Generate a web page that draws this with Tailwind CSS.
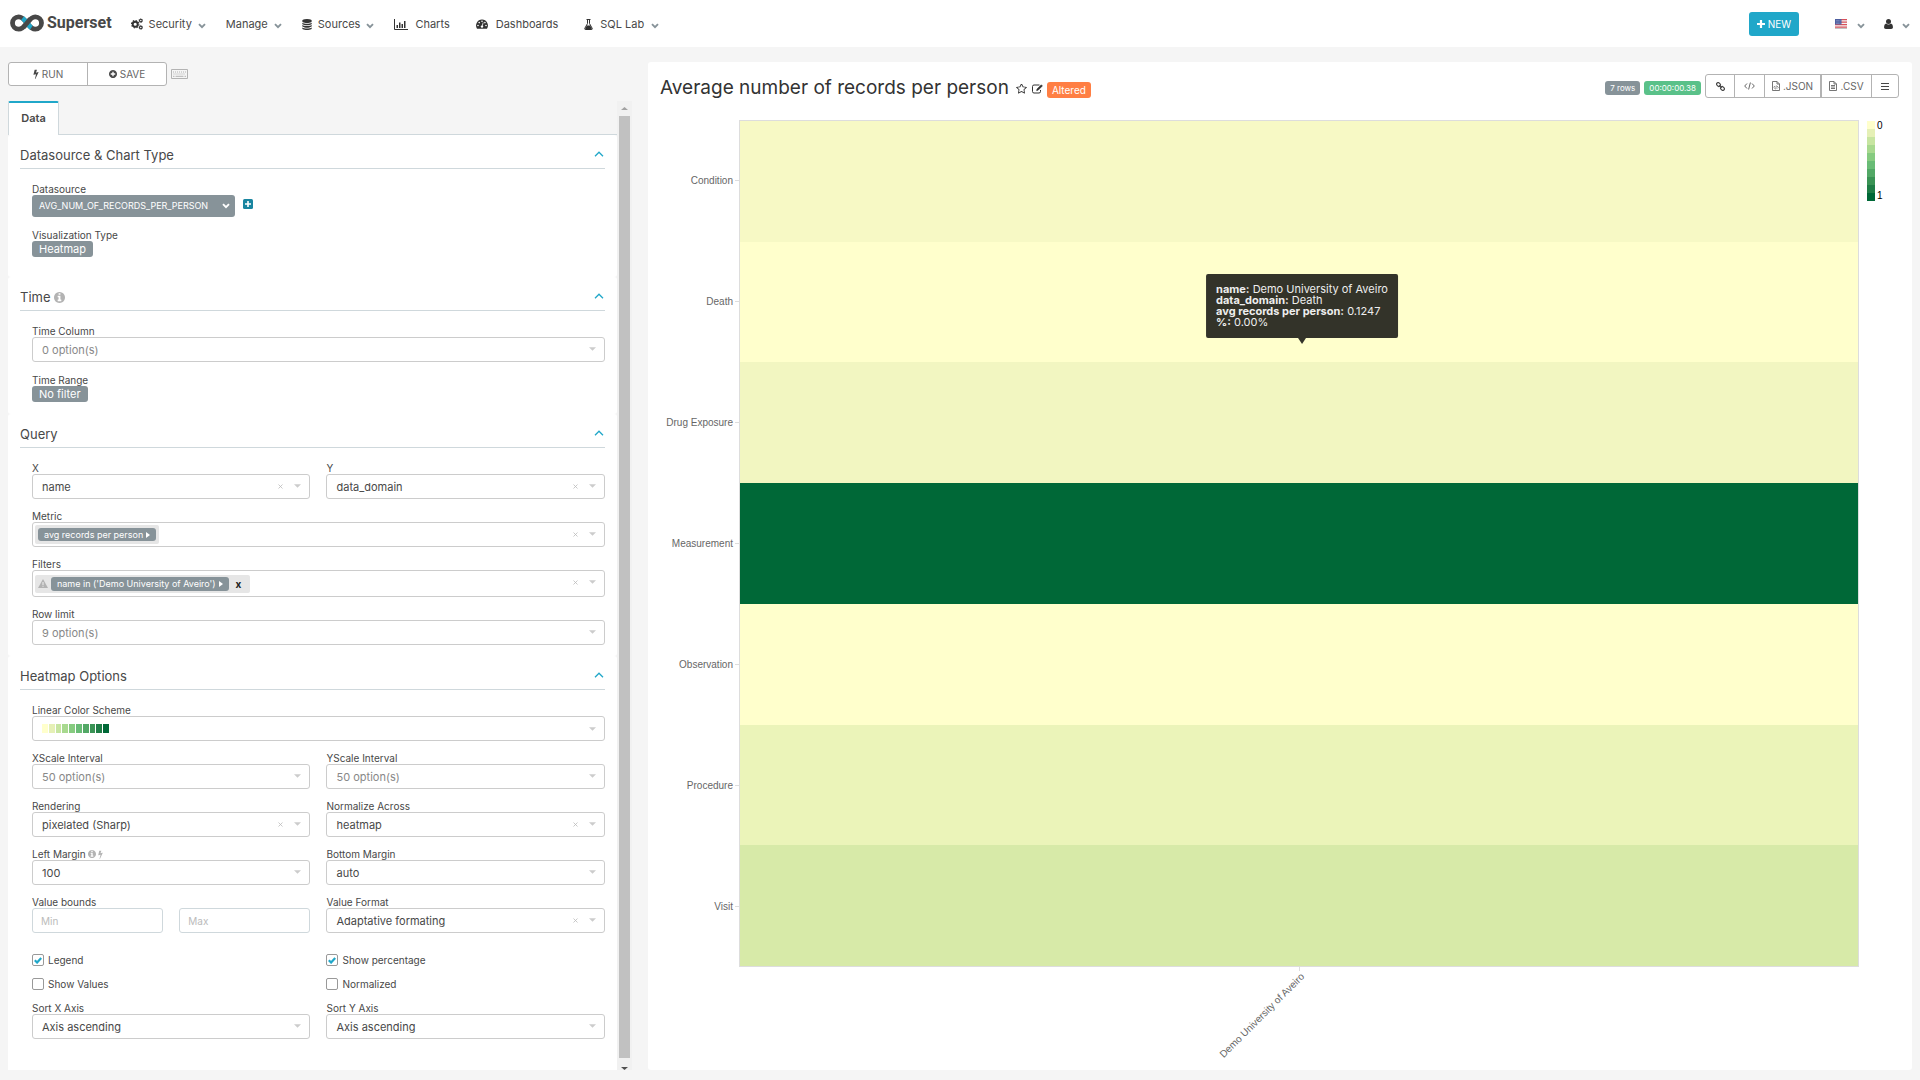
<!DOCTYPE html>
<html lang="en">
<head>
<meta charset="utf-8">
<meta name="viewport" content="width=device-width, initial-scale=1">
<title>Average number of records per person - Superset</title>
<script src="https://cdn.jsdelivr.net/npm/@tailwindcss/browser@4"></script>
</head>
<body class="flex min-h-screen flex-col bg-[#f5f5f5] font-['Inter',sans-serif] text-[11px] leading-[14px] text-[#484848]">

<svg class="hidden" aria-hidden="true">
  <symbol id="chev" viewBox="0 0 8 6"><path d="M1 1.200l3 3 3-3" fill="none" stroke="currentColor" stroke-width="1.900"/></symbol>
  <symbol id="up" viewBox="0 0 10 6"><path d="M1 5.200l4-4 4 4" fill="none" stroke="currentColor" stroke-width="1.300"/></symbol>
  <symbol id="bolt" viewBox="400 0 1000 1792"><path fill="currentColor" d="M1333 566q18 20 7 44l-540 1157q-13 25-42 25-4 0-14-2-17-5-25.500-19t-4.500-30l197-808-406 101q-4 1-12 1-18 0-31-11-18-15-13-39l201-825q4-14 16-23t28-9h328q19 0 32 12.500t13 29.500q0 8-5 18l-171 463 396-98q8-2 12-2 19 0 34 15z"/></symbol>
  <symbol id="info" viewBox="128 128 1536 1536"><path fill="currentColor" d="M1152 1376v-160q0-14-9-23t-23-9h-96v-512q0-14-9-23t-23-9h-320q-14 0-23 9t-9 23v160q0 14 9 23t23 9h96v320h-96q-14 0-23 9t-9 23v160q0 14 9 23t23 9h448q14 0 23-9t9-23zm-128-896v-160q0-14-9-23t-23-9h-192q-14 0-23 9t-9 23v160q0 14 9 23t23 9h192q14 0 23-9t9-23zm640 416q0 209-103 385.500t-279.500 279.500-385.500 103-385.500-103-279.500-279.500-103-385.500 103-385.500 279.500-279.500 385.500-103 385.500 103 279.500 279.500 103 385.500z"/></symbol>
  <symbol id="caret" viewBox="0 0 8 4"><path fill="currentColor" d="M0 0h8l-4 4z"/></symbol>
  <symbol id="x" viewBox="0 0 5 5"><path d="M.5.5l4 4M4.500.5l-4 4" stroke="currentColor" stroke-width=".8"/></symbol>
</svg>

<header class="flex h-[47px] items-center bg-white pr-[10px] pl-[10px]">
  <a href="#" class="mb-[2px] flex items-center gap-[3px]">
    <svg class="h-[18px] w-[34px]" viewBox="0 0 34 18" fill="none" stroke-width="4.800">
      <path d="M17 9c-3-4-5-6.200-8.300-6.200a6.200 6.200 0 0 0 0 12.400C12 15.200 14 13 17 9s5-6.200 8.300-6.200a6.200 6.200 0 0 1 0 12.400C22 15.200 20 13 17 9z" stroke="#484848"/>
      <path d="M12.600 4.200C14 5.300 15.500 7.200 17 9s2.900 3.800 4.300 4.800" stroke="#20a7c9"/>
      <path d="M13.600 13C14.800 12 15.800 10.600 17 9s2.200-3 3.400-4" stroke="#484848"/>
    </svg>
    <span class="font-['Roboto',sans-serif] text-base leading-5 font-bold">Superset</span>
  </a>
  <nav class="mt-[1px] ml-[19px] flex items-center gap-5">
    <a href="#" class="flex items-center gap-[6px]">
      <svg class="size-3" viewBox="0 0 12 12" fill="none" stroke="#333">
        <circle cx="4.200" cy="6.200" r="2.500" stroke-width="1.900"/><circle cx="4.200" cy="6.200" r="3.700" stroke-width="1.100" stroke-dasharray="1.450 1.450"/>
        <circle cx="9.800" cy="2.600" r="1.300" stroke-width="1.100"/><circle cx="9.800" cy="2.600" r="2" stroke-width=".6" stroke-dasharray=".8 .8"/>
        <circle cx="9.800" cy="9.400" r="1.300" stroke-width="1.100"/><circle cx="9.800" cy="9.400" r="2" stroke-width=".6" stroke-dasharray=".8 .8"/>
      </svg>Security<svg class="mt-[3px] h-[6px] w-2 text-[#879399]"><use href="#chev"/></svg></a>
    <a href="#" class="flex items-center gap-[6px]">Manage<svg class="mt-[3px] h-[6px] w-2 text-[#879399]"><use href="#chev"/></svg></a>
    <a href="#" class="flex items-center gap-[6px]">
      <svg class="h-[11px] w-[10px]" viewBox="128 0 1536 1792" fill="#333"><path d="M896 768q237 0 443-43t325-127v170q0 69-103 128t-280 93.500-385 34.500-385-34.500-280-93.500-103-128v-170q119 84 325 127t443 43zm0 768q237 0 443-43t325-127v170q0 69-103 128t-280 93.500-385 34.500-385-34.500-280-93.500-103-128v-170q119 84 325 127t443 43zm0-384q237 0 443-43t325-127v170q0 69-103 128t-280 93.500-385 34.500-385-34.500-280-93.500-103-128v-170q119 84 325 127t443 43zm0-1152q208 0 385 34.500t280 93.500 103 128v128q0 69-103 128t-280 93.500-385 34.500-385-34.500-280-93.500-103-128v-128q0-69 103-128t280-93.500 385-34.500z"/></svg>
      Sources<svg class="mt-[3px] h-[6px] w-2 text-[#879399]"><use href="#chev"/></svg></a>
    <a href="#" class="flex items-center gap-[7px] pr-[6px]">
      <svg class="h-[11px] w-[14px]" viewBox="0 0 14 11"><path d="M.5 0v10.500H14" fill="none" stroke="#333"/><path d="M2.500 6h1.500v3H2.500zM5 3.500h1.500V9H5zM7.500 5H9v4H7.500zM10 2h1.500v7H10z" fill="#333"/></svg>
      Charts</a>
    <a href="#" class="flex items-center gap-2 pr-[6px]">
      <svg class="h-[10px] w-3" viewBox="0 0 12 10"><path d="M6 .5a6 6 0 0 0-5 9.200h10A6 6 0 0 0 6 .5z" fill="#333"/><g fill="#fff"><circle cx="2" cy="6.500" r=".8"/><circle cx="3.200" cy="3.600" r=".8"/><circle cx="6" cy="2.300" r=".8"/><circle cx="10" cy="6.500" r=".8"/><circle cx="8.900" cy="3.600" r=".8"/></g><path d="M7.200 3.500L6.200 7" stroke="#fff" stroke-width=".8"/><circle cx="6" cy="7.600" r="1.200" fill="#fff"/></svg>
      Dashboards</a>
    <a href="#" class="flex items-center gap-[7px]">
      <svg class="h-[11px] w-[9px]" viewBox="0 0 9 11"><path d="M2.500.5h4M3.500.5v4L.9 9.200q-.6 1.200.6 1.300h6q1.200-.1.600-1.300L5.500 4.500v-4" fill="none" stroke="#333"/><path d="M2.800 6.500h3.400l2 4H.8z" fill="#333"/></svg>
      SQL Lab<svg class="mt-[3px] h-[6px] w-2 text-[#879399]"><use href="#chev"/></svg></a>
  </nav>
  <div class="ml-auto flex items-center">
    <button type="button" class="mt-[1px] flex h-6 w-[50px] items-center justify-center gap-[3px] rounded-[3px] bg-[#20a7c9] text-[10px] text-white">
      <svg class="size-2" viewBox="0 0 8 8"><path d="M4 0v8M0 4h8" stroke="#fff" stroke-width="2.200"/></svg>NEW</button>
    <a href="#" aria-label="Language" class="ml-9 flex items-center gap-[10px]">
      <svg class="h-[10px] w-3" viewBox="0 0 12 10"><path fill="#f3f3f3" d="M0 0h12v10H0z"/><path d="M0 .7h12M0 3.200h12M0 5.700h12M0 8.200h12" stroke="#d8505a" stroke-width="1.200"/><path fill="#4d5fa0" d="M0 0h6.500v5.500H0z"/><path d="M1 1.500h5M1 3h5M1 4.500h5" stroke="#c5cbe6" stroke-width=".5" stroke-dasharray=".6 .6"/><path d="M0 9.600h12" stroke="#999" stroke-width=".6"/></svg>
      <svg class="mt-[4px] h-[6px] w-2 text-[#879399]"><use href="#chev"/></svg></a>
    <a href="#" aria-label="Account" class="ml-[19px] flex items-center gap-[9px]">
      <svg class="h-[10px] w-[9px]" viewBox="0 0 9 10" fill="#333"><circle cx="4.500" cy="2.600" r="2.500"/><path d="M2 4.400Q0 5 0 8.200 0 10 1.800 10h5.400Q9 10 9 8.200 9 5 7 4.400 4.500 6.600 2 4.400z"/></svg>
      <svg class="mt-[4px] h-[6px] w-2 text-[#879399]"><use href="#chev"/></svg></a>
  </div>
</header>

<main class="flex flex-1 items-stretch pt-[15px] pb-[10px]">
  <section class="flex w-1/3 flex-col px-2" aria-label="Controls">
    <div class="flex items-center gap-1 text-[10px] text-[#666]">
      <div class="flex h-6 w-[159px] divide-x divide-[#b3b3b3] rounded-[3px] border border-[#b3b3b3] bg-white">
        <button type="button" class="flex flex-1 items-center justify-center gap-[3px]"><svg class="h-[10px] w-[6px] text-[#484848]"><use href="#bolt"/></svg>RUN</button>
        <button type="button" class="flex flex-1 items-center justify-center gap-[3px]"><svg class="size-2 text-[#484848]" viewBox="128 128 1536 1536"><path fill="currentColor" d="M1344 960v-128q0-26-19-45t-45-19h-256v-256q0-26-19-45t-45-19h-128q-26 0-45 19t-19 45v256h-256q-26 0-45 19t-19 45v128q0 26 19 45t45 19h256v256q0 26 19 45t45 19h128q26 0 45-19t19-45v-256h256q26 0 45-19t19-45zm320-64q0 209-103 385.500t-279.500 279.500-385.500 103-385.500-103-279.500-279.500-103-385.500 103-385.500 279.500-279.500 385.500-103 385.500 103 279.500 279.500 103 385.500z"/></svg>SAVE</button>
      </div>
      <svg class="h-[10px] w-[17px]" viewBox="0 0 17 10" fill="none" stroke="#b3b3b3"><path d="M.5.5h16v9H.5z"/><path d="M2 3h13M2.500 5h12" stroke-dasharray="1 1"/><path d="M2 7.300h1.500M4.500 7.300h8M13.500 7.300H15"/></svg>
    </div>

    <div class="mt-[15px] flex flex-1">
      <div class="flex min-w-0 flex-1 flex-col">
        <div class="flex h-[34px] border-b border-[#cfd8dc]">
          <a href="#" class="-mb-px flex w-[51px] items-center justify-center rounded-t-[2px] border-x border-t-2 border-x-[#cfd8dc] border-t-[#20a7c9] bg-white pb-[2px] font-semibold">Data</a>
        </div>

        <section class="rounded-[3px] bg-white px-3 pb-5">
          <h2 class="flex items-center justify-between border-b border-[#cfd8dc] pt-[11px] pb-1 text-[13px] leading-[18px]">Datasource &amp; Chart Type<svg class="mr-px mb-[2px] h-[6px] w-[10px] text-[#20a7c9]"><use href="#up"/></svg></h2>
          <div class="mt-[14px] flex flex-col items-start gap-3 pl-3">
            <div>
              <div class="text-[10px] leading-3">Datasource</div>
              <div class="flex items-start gap-2">
                <button type="button" class="flex h-[22px] w-[203px] items-center justify-between rounded-[3px] bg-[#879399] pr-[5px] pl-[7px] text-[9px] text-white">AVG_NUM_OF_RECORDS_PER_PERSON<svg class="h-[6px] w-2 text-white"><use href="#chev"/></svg></button>
                <button type="button" aria-label="Expand datasource" class="mt-1"><svg class="size-[10px]" viewBox="0 0 10 10"><rect width="10" height="10" rx="1.500" fill="#1985a0"/><path d="M5 2v6M2 5h6" stroke="#fff" stroke-width="1.600"/></svg></button>
              </div>
            </div>
            <div>
              <div class="text-[10px] leading-3">Visualization Type</div>
              <button type="button" class="block h-4 rounded-[3px] bg-[#879399] px-[7px] leading-4 text-white">Heatmap</button>
            </div>
          </div>
        </section>

        <section class="rounded-[3px] bg-white px-3 pb-3">
          <h2 class="flex items-center justify-between border-b border-[#cfd8dc] pt-[11px] pb-1 text-[13px] leading-[18px]"><span class="flex items-center gap-[3px]">Time<svg class="size-[11px] text-[#b3b3b3]"><use href="#info"/></svg></span><svg class="mr-px mb-[2px] h-[6px] w-[10px] text-[#20a7c9]"><use href="#up"/></svg></h2>
          <div class="mt-[14px] flex flex-col gap-3 pl-3">
            <div>
              <label for="timecol" class="block text-[10px] leading-3">Time Column</label>
              <div class="relative"><select id="timecol" class="block h-[25px] w-full appearance-none rounded-[3px] border border-[#ccc] bg-white px-[9px] text-[#888]"><option>0 option(s)</option></select><svg class="pointer-events-none absolute top-[10px] right-[9px] h-1 w-[7px] text-[#ccc]"><use href="#caret"/></svg></div>
            </div>
            <div>
              <div class="text-[10px] leading-3">Time Range</div>
              <button type="button" class="block h-4 rounded-[3px] bg-[#879399] px-[7px] leading-4 text-white">No filter</button>
            </div>
          </div>
        </section>

        <section class="rounded-[3px] bg-white px-3 pb-[11px]">
          <h2 class="flex items-center justify-between border-b border-[#cfd8dc] pt-[11px] pb-1 text-[13px] leading-[18px]">Query<svg class="mr-px mb-[2px] h-[6px] w-[10px] text-[#20a7c9]"><use href="#up"/></svg></h2>
          <div class="mt-[14px] grid grid-cols-2 gap-x-4 gap-y-[11px] pl-3">
            <div>
              <label for="x-axis" class="block text-[10px] leading-3">X</label>
              <div class="relative"><select id="x-axis" class="block h-[25px] w-full appearance-none rounded-[3px] border border-[#ccc] bg-white px-[9px]"><option>name</option></select><button type="button" aria-label="Clear" class="absolute top-[10px] right-[27px] text-[#bbb]"><svg class="size-[5px]"><use href="#x"/></svg></button><svg class="pointer-events-none absolute top-[10px] right-[9px] h-1 w-[7px] text-[#ccc]"><use href="#caret"/></svg></div>
            </div>
            <div>
              <label for="y-axis" class="block text-[10px] leading-3">Y</label>
              <div class="relative"><select id="y-axis" class="block h-[25px] w-full appearance-none rounded-[3px] border border-[#ccc] bg-white px-[9px]"><option>data_domain</option></select><button type="button" aria-label="Clear" class="absolute top-[10px] right-[27px] text-[#bbb]"><svg class="size-[5px]"><use href="#x"/></svg></button><svg class="pointer-events-none absolute top-[10px] right-[9px] h-1 w-[7px] text-[#ccc]"><use href="#caret"/></svg></div>
            </div>
            <div class="col-span-2">
              <div class="text-[10px] leading-3">Metric</div>
              <div class="relative flex h-[25px] items-center rounded-[3px] border border-[#ccc] bg-white px-[2px]">
                <div class="flex rounded-[2px] bg-[#e6e6e6] p-[3px]"><button type="button" class="flex h-[13px] items-center gap-[3px] rounded-[3px] bg-[#879399] px-[6px] text-[9px] text-white">avg records per person<svg class="h-[6px] w-1" viewBox="0 0 4 6"><path d="M0 0l4 3-4 3z" fill="#fff"/></svg></button></div>
                <button type="button" aria-label="Clear" class="absolute top-[9px] right-[26px] text-[#bbb]"><svg class="size-[5px]"><use href="#x"/></svg></button><svg class="pointer-events-none absolute top-[9px] right-2 h-1 w-[7px] text-[#ccc]"><use href="#caret"/></svg>
              </div>
            </div>
            <div class="col-span-2">
              <div class="text-[10px] leading-3">Filters</div>
              <div class="relative flex h-[27px] items-center rounded-[3px] border border-[#ccc] bg-white px-[2px]">
                <div class="flex items-center rounded-[2px] bg-[#e6e6e6] p-[2px]">
                  <svg class="mx-px h-[9px] w-[10px]" viewBox="0 0 10 9"><path d="M5 0l5 9H0z" fill="#b3b3b3"/><path d="M5 3v3M5 6.800v1" stroke="#e6e6e6" stroke-width="1.200"/></svg>
                  <button type="button" class="ml-[2px] flex h-[14px] items-center gap-[3px] rounded-[3px] bg-[#879399] px-[6px] text-[9px] text-white">name in ('Demo University of Aveiro')<svg class="h-[6px] w-1" viewBox="0 0 4 6"><path d="M0 0l4 3-4 3z" fill="#fff"/></svg></button>
                  <button type="button" aria-label="Remove filter" class="mx-[5px] px-[2px] text-[10px] leading-[14px] font-bold text-[#222]">x</button>
                </div>
                <button type="button" aria-label="Clear" class="absolute top-[9px] right-[26px] text-[#bbb]"><svg class="size-[5px]"><use href="#x"/></svg></button><svg class="pointer-events-none absolute top-[9px] right-2 h-1 w-[7px] text-[#ccc]"><use href="#caret"/></svg>
              </div>
            </div>
            <div class="col-span-2">
              <label for="rowlimit" class="block text-[10px] leading-3">Row limit</label>
              <div class="relative"><select id="rowlimit" class="block h-[25px] w-full appearance-none rounded-[3px] border border-[#ccc] bg-white px-[9px] text-[#888]"><option>9 option(s)</option></select><svg class="pointer-events-none absolute top-[10px] right-[9px] h-1 w-[7px] text-[#ccc]"><use href="#caret"/></svg></div>
            </div>
          </div>
        </section>

        <section class="flex-1 rounded-t-[3px] bg-white px-3">
          <h2 class="flex items-center justify-between border-b border-[#cfd8dc] pt-[11px] pb-1 text-[13px] leading-[18px]">Heatmap Options<svg class="mr-px mb-[2px] h-[6px] w-[10px] text-[#20a7c9]"><use href="#up"/></svg></h2>
          <div class="mt-[14px] grid grid-cols-2 gap-x-4 gap-y-[11px] pl-3">
            <div class="col-span-2">
              <div class="text-[10px] leading-3">Linear Color Scheme</div>
              <button type="button" aria-haspopup="listbox" aria-label="Linear Color Scheme" class="relative flex h-[25px] w-full items-center rounded-[3px] border border-[#ccc] bg-white px-[9px]">
                <span class="grid h-[9px] w-[67px] grid-cols-10 gap-px"><i class="bg-[#ffffcc]"></i><i class="bg-[#e5f0b6]"></i><i class="bg-[#c7e5a1]"></i><i class="bg-[#a8d98f]"></i><i class="bg-[#86cb80]"></i><i class="bg-[#69bc76]"></i><i class="bg-[#52a866]"></i><i class="bg-[#3a9355]"></i><i class="bg-[#1f7d46]"></i><i class="bg-[#006837]"></i></span>
                <svg class="absolute top-[10px] right-2 h-1 w-[7px] text-[#ccc]"><use href="#caret"/></svg>
              </button>
            </div>
            <div>
              <label for="xscale" class="block text-[10px] leading-3">XScale Interval</label>
              <div class="relative"><select id="xscale" class="block h-[25px] w-full appearance-none rounded-[3px] border border-[#ccc] bg-white px-[9px] text-[#888]"><option>50 option(s)</option></select><svg class="pointer-events-none absolute top-[10px] right-[9px] h-1 w-[7px] text-[#ccc]"><use href="#caret"/></svg></div>
            </div>
            <div>
              <label for="yscale" class="block text-[10px] leading-3">YScale Interval</label>
              <div class="relative"><select id="yscale" class="block h-[25px] w-full appearance-none rounded-[3px] border border-[#ccc] bg-white px-[9px] text-[#888]"><option>50 option(s)</option></select><svg class="pointer-events-none absolute top-[10px] right-[9px] h-1 w-[7px] text-[#ccc]"><use href="#caret"/></svg></div>
            </div>
            <div>
              <label for="rendering" class="block text-[10px] leading-3">Rendering</label>
              <div class="relative"><select id="rendering" class="block h-[25px] w-full appearance-none rounded-[3px] border border-[#ccc] bg-white px-[9px]"><option>pixelated (Sharp)</option></select><button type="button" aria-label="Clear" class="absolute top-[10px] right-[27px] text-[#bbb]"><svg class="size-[5px]"><use href="#x"/></svg></button><svg class="pointer-events-none absolute top-[10px] right-[9px] h-1 w-[7px] text-[#ccc]"><use href="#caret"/></svg></div>
            </div>
            <div>
              <label for="normalize" class="block text-[10px] leading-3">Normalize Across</label>
              <div class="relative"><select id="normalize" class="block h-[25px] w-full appearance-none rounded-[3px] border border-[#ccc] bg-white px-[9px]"><option>heatmap</option></select><button type="button" aria-label="Clear" class="absolute top-[10px] right-[27px] text-[#bbb]"><svg class="size-[5px]"><use href="#x"/></svg></button><svg class="pointer-events-none absolute top-[10px] right-[9px] h-1 w-[7px] text-[#ccc]"><use href="#caret"/></svg></div>
            </div>
            <div>
              <label for="leftmargin" class="flex items-center gap-[2px] text-[10px] leading-3">Left Margin<svg class="size-2 text-[#b3b3b3]"><use href="#info"/></svg><svg class="h-[9px] w-[5px] text-[#b3b3b3]"><use href="#bolt"/></svg></label>
              <div class="relative"><select id="leftmargin" class="block h-[25px] w-full appearance-none rounded-[3px] border border-[#ccc] bg-white px-[9px]"><option>100</option></select><svg class="pointer-events-none absolute top-[10px] right-[9px] h-1 w-[7px] text-[#ccc]"><use href="#caret"/></svg></div>
            </div>
            <div>
              <label for="bottommargin" class="block text-[10px] leading-3">Bottom Margin</label>
              <div class="relative"><select id="bottommargin" class="block h-[25px] w-full appearance-none rounded-[3px] border border-[#ccc] bg-white px-[9px]"><option>auto</option></select><svg class="pointer-events-none absolute top-[10px] right-[9px] h-1 w-[7px] text-[#ccc]"><use href="#caret"/></svg></div>
            </div>
            <div>
              <label for="bound-min" class="block text-[10px] leading-3">Value bounds</label>
              <div class="grid grid-cols-2 gap-4">
                <input id="bound-min" type="text" placeholder="Min" class="h-[25px] w-full min-w-0 rounded-[3px] border border-[#cfd8dc] bg-white px-2 text-[10px] placeholder:text-[#bbb]">
                <input type="text" placeholder="Max" aria-label="Maximum value" class="h-[25px] w-full min-w-0 rounded-[3px] border border-[#cfd8dc] bg-white px-2 text-[10px] placeholder:text-[#bbb]">
              </div>
            </div>
            <div>
              <label for="valueformat" class="block text-[10px] leading-3">Value Format</label>
              <div class="relative"><select id="valueformat" class="block h-[25px] w-full appearance-none rounded-[3px] border border-[#ccc] bg-white px-[9px]"><option>Adaptative formating</option></select><button type="button" aria-label="Clear" class="absolute top-[10px] right-[27px] text-[#bbb]"><svg class="size-[5px]"><use href="#x"/></svg></button><svg class="pointer-events-none absolute top-[10px] right-[9px] h-1 w-[7px] text-[#ccc]"><use href="#caret"/></svg></div>
            </div>
          </div>
          <div class="mt-[21px] grid grid-cols-2 gap-x-4 gap-y-3 pb-7 pl-3 text-[10px] leading-3">
            <label class="relative flex items-center gap-1"><input type="checkbox" checked class="peer size-3 appearance-none rounded-[2px] border border-[#999] bg-white"><svg class="pointer-events-none absolute top-[3px] left-[2px] hidden h-[7px] w-2 peer-checked:block" viewBox="0 0 8 7"><path d="M.8 3.200l2.300 2.300L7.200 1" fill="none" stroke="#20a7c9" stroke-width="2.200"/></svg>Legend</label>
            <label class="relative flex items-center gap-1"><input type="checkbox" checked class="peer size-3 appearance-none rounded-[2px] border border-[#999] bg-white"><svg class="pointer-events-none absolute top-[3px] left-[2px] hidden h-[7px] w-2 peer-checked:block" viewBox="0 0 8 7"><path d="M.8 3.200l2.300 2.300L7.200 1" fill="none" stroke="#20a7c9" stroke-width="2.200"/></svg>Show percentage</label>
            <label class="flex items-center gap-1"><input type="checkbox" class="size-3 appearance-none rounded-[2px] border border-[#999] bg-white">Show Values</label>
            <label class="flex items-center gap-1"><input type="checkbox" class="size-3 appearance-none rounded-[2px] border border-[#999] bg-white">Normalized</label>
            <div>
              <label for="sortx" class="block">Sort X Axis</label>
              <div class="relative"><select id="sortx" class="block h-[25px] w-full appearance-none rounded-[3px] border border-[#ccc] bg-white px-[9px] text-[11px]"><option>Axis ascending</option></select><svg class="pointer-events-none absolute top-[10px] right-[9px] h-1 w-[7px] text-[#ccc]"><use href="#caret"/></svg></div>
            </div>
            <div>
              <label for="sorty" class="block">Sort Y Axis</label>
              <div class="relative"><select id="sorty" class="block h-[25px] w-full appearance-none rounded-[3px] border border-[#ccc] bg-white px-[9px] text-[11px]"><option>Axis ascending</option></select><svg class="pointer-events-none absolute top-[10px] right-[9px] h-1 w-[7px] text-[#ccc]"><use href="#caret"/></svg></div>
            </div>
          </div>
        </section>
      </div>

      <div class="flex w-[15px] flex-col items-center bg-[#f1f1f1]" aria-hidden="true">
        <svg class="my-[6px] h-[3px] w-[7px]" viewBox="0 0 7 3"><path d="M0 3L3.500 0 7 3z" fill="#a3a3a3"/></svg>
        <div class="w-[11px] flex-1 bg-[#c1c1c1]"></div>
        <svg class="mt-[9px] h-[3px] w-[7px]" viewBox="0 0 7 3"><path d="M0 0l3.500 3L7 0z" fill="#505050"/></svg>
      </div>
    </div>
  </section>

  <section class="min-w-0 flex-1 px-2" aria-label="Chart">
    <div class="flex h-full flex-col rounded-[3px] bg-white">
      <div class="flex h-[58px] items-start pt-3 pr-[13px] pl-3">
        <h1 class="text-[19px] leading-7 text-[#333]">Average number of records per person</h1>
        <button type="button" aria-label="Favorite" class="mt-[10px] ml-[7px]"><svg class="h-[10px] w-[11px]" viewBox="64 170 1664 1504" fill="#333"><path d="M1201 1004l306-297-422-62-189-382-189 382-422 62 306 297-73 421 378-199 377 199zm527-357q0 22-26 48l-363 354 86 500q1 7 1 20 0 50-41 50-19 0-40-12l-449-236-449 236q-22 12-40 12-21 0-31.500-14.500t-10.500-35.500q0-6 2-20l86-500-364-354q-25-27-25-48 0-37 56-46l502-73 225-455q19-41 49-41t49 41l225 455 502 73q56 9 56 46z"/></svg></button>
        <button type="button" aria-label="Edit properties" class="mt-[10px] ml-[5px]"><svg class="h-[10px] w-[11px]" viewBox="0 0 11 10" fill="none" stroke="#333"><path d="M7.500 1H2Q.5 1 .5 2.500v5Q.5 9 2 9h5q1.500 0 1.500-1.500V6"/><path d="M4.600 6.600l.4-1.500L9.300.8l1.100 1.100L6.100 6.200z" fill="#333" stroke-width=".6"/></svg></button>
        <span class="mt-2 ml-1 h-4 rounded-[3px] bg-[#ff7f44] px-[5px] text-[10px] leading-4 text-white">Altered</span>
        <div class="ml-auto flex items-center">
          <span class="mt-1 h-[14px] rounded-[3px] bg-[#879399] px-[5px] text-[8px] leading-[14px] text-white">7 rows</span>
          <span class="mt-1 ml-1 h-[14px] rounded-[3px] bg-[#5ac189] px-[5px] text-[8px] leading-[14px] text-white">00:00:00.38</span>
          <div class="ml-1 flex h-6 divide-x divide-[#b3b3b3] rounded-[3px] border border-[#b3b3b3] bg-white text-[10px] text-[#666]">
            <button type="button" aria-label="Copy link" class="flex w-[29px] items-center justify-center"><svg class="size-[9px]" viewBox="0 0 9 9" fill="none" stroke="#484848" stroke-width="1.200"><rect x="-1.500" y="-2" width="3" height="4" rx="1.300" transform="translate(2.500 2.500) rotate(-45)"/><rect x="-1.500" y="-2" width="3" height="4" rx="1.300" transform="translate(6.500 6.500) rotate(-45)"/><path d="M3.300 3.300l2.400 2.400"/></svg></button>
            <button type="button" aria-label="Embed" class="flex w-[30px] items-center justify-center"><svg class="h-2 w-[11px]" viewBox="0 0 11 8" fill="none" stroke="#666"><path d="M3 1.500L.7 4 3 6.500M8 1.500L10.300 4 8 6.500M6.400.5l-1.800 7"/></svg></button>
            <button type="button" class="flex w-14 items-center justify-center gap-[3px]"><svg class="h-[10px] w-2" viewBox="0 0 8 10" fill="none" stroke="#666" stroke-width=".9"><path d="M.5.5H5L7.500 3v6.500h-7zM5 .5V3h2.500"/><path d="M3 5L1.700 6.300 3 7.600M5 5l1.300 1.300L5 7.600M4.400 4.400l-.8 4" stroke-width=".7"/></svg>.JSON</button>
            <button type="button" class="flex w-[51px] items-center justify-center gap-[3px] border-l border-l-[#b3b3b3]"><svg class="h-[10px] w-2" viewBox="0 0 8 10" fill="none" stroke="#666" stroke-width=".9"><path d="M.5.5H5L7.500 3v6.500h-7zM5 .5V3h2.500M2 4.500h4M2 6h4M2 7.500h4"/></svg>.CSV</button>
            <button type="button" aria-label="More actions" class="flex w-[26px] items-center justify-center"><svg class="h-[7px] w-2" viewBox="0 0 8 7"><path d="M0 .5h8M0 3.500h8M0 6.500h8" stroke="#484848" stroke-width="1.200"/></svg></button>
          </div>
        </div>
      </div>

      <div class="grid flex-1 grid-cols-[91px_1fr_53px] grid-rows-[1fr_103px] font-['Liberation_Sans',sans-serif] text-[10px] leading-3 text-[#666]">
        <div class="grid grid-rows-7 text-right">
          <div class="flex items-center justify-end gap-[2px]">Condition<i class="h-px w-1 bg-[#ddd]"></i></div>
          <div class="flex items-center justify-end gap-[2px]">Death<i class="h-px w-1 bg-[#ddd]"></i></div>
          <div class="flex items-center justify-end gap-[2px]">Drug Exposure<i class="h-px w-1 bg-[#ddd]"></i></div>
          <div class="flex items-center justify-end gap-[2px]">Measurement<i class="h-px w-1 bg-[#ddd]"></i></div>
          <div class="flex items-center justify-end gap-[2px]">Observation<i class="h-px w-1 bg-[#ddd]"></i></div>
          <div class="flex items-center justify-end gap-[2px]">Procedure<i class="h-px w-1 bg-[#ddd]"></i></div>
          <div class="flex items-center justify-end gap-[2px]">Visit<i class="h-px w-1 bg-[#ddd]"></i></div>
        </div>
        <div class="grid grid-rows-7 border border-[#ddd]">
          <div class="bg-[#f7f9c5]"></div>
          <div class="relative bg-[#ffffcc]">
            <div role="tooltip" class="absolute top-8 left-1/2 ml-[3px] -translate-x-1/2 rounded-[2px] bg-[#333329] p-[10px] font-['Inter',sans-serif] text-[11px] leading-[11px] whitespace-nowrap text-[#eee]">
              <div><b>name:</b> Demo University of Aveiro</div>
              <div><b>data_domain:</b> Death</div>
              <div><b>avg records per person:</b> 0.1247</div>
              <div><b>%:</b> 0.00%</div>
              <svg class="absolute top-full left-1/2 h-[6px] w-2 -translate-x-1/2" viewBox="0 0 8 6"><path d="M0 0h8L4 6z" fill="#333329"/></svg>
            </div>
          </div>
          <div class="bg-[#f2f6c1]"></div>
          <div class="bg-[#006837]"></div>
          <div class="bg-[#ffffcc]"></div>
          <div class="bg-[#ebf4b9]"></div>
          <div class="bg-[#d7eaa8]"></div>
        </div>
        <div class="flex items-start gap-[2px] pt-px pl-2 text-black">
          <div class="w-2">
            <div class="h-2 bg-[#ffffcc]"></div><div class="h-2 bg-[#e5f0b6]"></div><div class="h-2 bg-[#c7e5a1]"></div><div class="h-2 bg-[#a8d98f]"></div><div class="h-2 bg-[#86cb80]"></div><div class="h-2 bg-[#69bc76]"></div><div class="h-2 bg-[#52a866]"></div><div class="h-2 bg-[#3a9355]"></div><div class="h-2 bg-[#1f7d46]"></div><div class="h-2 bg-[#006837]"></div>
          </div>
          <div class="flex h-20 flex-col justify-between"><span class="leading-[10px]">0</span><span class="leading-[10px]">1</span></div>
        </div>
        <div class="relative col-start-2">
          <i class="absolute top-0 left-1/2 h-1 w-px bg-[#ddd]"></i>
          <span class="absolute top-[2px] right-1/2 -mr-1 origin-right -rotate-45 whitespace-nowrap">Demo University of Aveiro</span>
        </div>
      </div>
    </div>
  </section>
</main>
</body>
</html>
